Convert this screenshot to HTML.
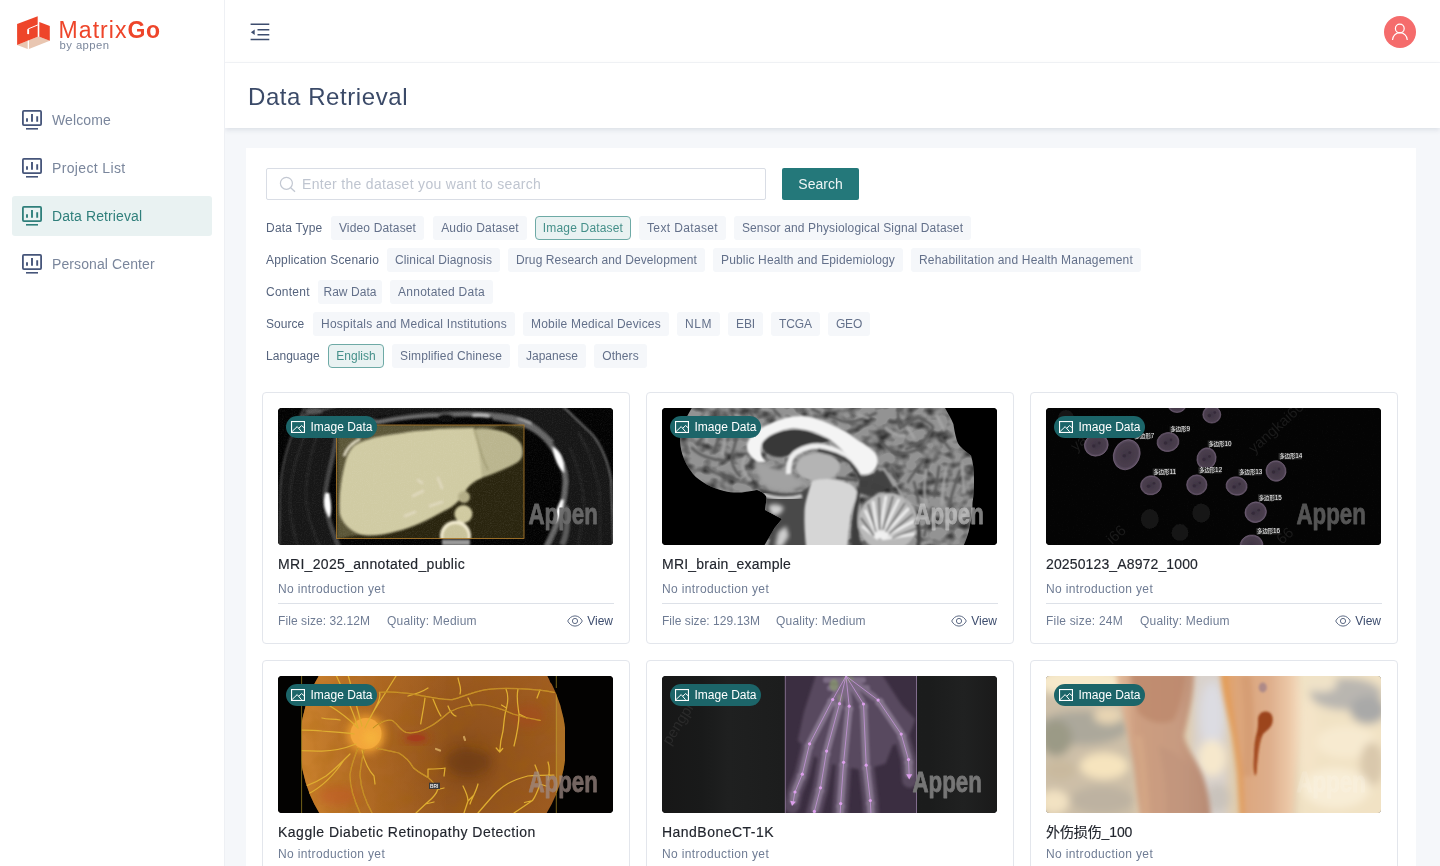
<!DOCTYPE html>
<html lang="en">
<head>
<meta charset="utf-8">
<title>Data Retrieval</title>
<style>
*{box-sizing:border-box;margin:0;padding:0}
html,body{width:1440px;height:866px;overflow:hidden;background:#f5f7fa}
body{font-family:"Liberation Sans","Noto Sans CJK SC",sans-serif;color:#3d4d6e;position:relative;-webkit-font-smoothing:antialiased}
#side,#head,#title,#panel{will-change:transform}
/* sidebar */
#side{z-index:2;position:absolute;left:0;top:0;width:225px;height:866px;background:#fff;border-right:1px solid #eef0f4}
#logo{position:absolute;left:17px;top:16px}
#brand{position:absolute;left:58.600px;top:16.500px;font-size:23px;line-height:26px;color:#ee452a;letter-spacing:1.050px;white-space:nowrap}
#brand b{font-weight:700;letter-spacing:.5px}
#by{position:absolute;left:59.500px;top:38px;font-size:11.3px;line-height:14px;color:#7b879c;letter-spacing:.44px;white-space:nowrap}
.mi{position:absolute;left:12px;width:200px;height:40px;border-radius:3px;font-size:14px;line-height:40px;color:#7a869c;white-space:nowrap}
.mi svg{position:absolute;left:9px;top:9px;color:#46557a}
.mi.on svg{color:#2f7f7b}
.mi span{position:absolute;left:40px;top:0}
.mi.on{background:#e9f2f2;color:#2f7f7b}
.mi span{letter-spacing:.1px}
/* header */
#head{position:absolute;left:225px;top:0;width:1215px;height:63px;background:#fff;border-bottom:1px solid #f4f5f8;box-shadow:0 1px 2px rgba(30,50,90,.03)}
#title{position:absolute;left:225px;top:63px;width:1215px;height:65px;background:#fff;box-shadow:0 2px 5px rgba(40,60,90,.12)}
#title h1{position:absolute;left:23px;top:18px;font-size:24px;line-height:32px;font-weight:400;color:#3b4a68;letter-spacing:.57px;white-space:nowrap}
#avatar{position:absolute;left:1384px;top:16px;width:32px;height:32px;border-radius:50%;background:#f56c6c}
/* panel */
#panel{position:absolute;left:246px;top:148px;width:1170px;height:730px;background:#fff}
#search{position:absolute;left:20px;top:20px;width:500px;height:32px;border:1px solid #d9dde5;border-radius:2px;background:#fff}
#search span{position:absolute;left:35px;top:0;line-height:30px;font-size:14px;color:#bfc5d0;letter-spacing:.31px;white-space:nowrap}
#btn{position:absolute;left:536px;top:20px;width:77px;height:32px;background:#24787a;color:rgba(255,255,255,.92);font-size:14px;line-height:32px;text-align:center;border-radius:2px}
.lb,.tg{position:absolute;height:24px;white-space:nowrap;font-size:12px;line-height:24px;color:#56647e}
.tg{background:#f5f7fa;border-radius:3px;text-align:center;color:#63708a}
.tg.on{background:#e9f2f2;border:1px solid #6eaaa6;color:#45908a;line-height:22px;border-radius:4px}
/* cards */
.card{position:absolute;width:368px;height:252px;border:1px solid #e3e6ec;border-radius:4px;background:#fff}
.card .im{position:absolute;left:15px;top:15px;width:335px;height:137px;border-radius:4px;overflow:hidden;background:#000}
.card .im svg{display:block}
.badge{position:absolute;left:8px;top:8px;height:22px;width:91px;border-radius:11px;background:#1c6569;color:#fff;font-size:12px;line-height:22px}
.badge span{position:absolute;left:24.500px;top:0;white-space:nowrap}
.badge svg{position:absolute;left:5px;top:5px}
.card h3{position:absolute;left:15px;top:160px;font-size:14px;-webkit-text-stroke:.15px #22262e;line-height:22px;font-weight:400;color:#22262e;white-space:nowrap}
.card .ds{position:absolute;left:15px;top:186.800px;letter-spacing:.37px;font-size:12px;line-height:18px;color:#6f7c94;white-space:nowrap}
.card .hr{position:absolute;left:15px;top:210px;width:336px;height:1px;background:#dde1e8}
.card .ft{position:absolute;left:15px;top:219px;font-size:12px;line-height:18px;color:#6f7c94;white-space:nowrap}
.card .q{position:absolute;left:124px;top:219px;letter-spacing:.2px;font-size:12px;line-height:18px;color:#6f7c94;white-space:nowrap}
.card .vw{position:absolute;right:16px;top:219px;font-size:12px;line-height:18px;color:#3d4d6e;white-space:nowrap}
.card .vw svg{position:absolute;left:-20px;top:3px}
</style>
</head>
<body>
<div id="side">
  <svg id="logo" width="34" height="34" viewBox="0 0 34 34">
    <polygon points="0.1,28.9 20.7,20.7 22.3,20.7 32.8,24.8 11.3,33.3" fill="#e9c6b1"/>
    <polygon points="0.1,8.1 20.7,0.3 20.7,20.8 0.1,28.9" fill="#ee452a"/>
    <polygon points="22.3,6.1 32.8,10 32.8,24.7 22.3,20.8" fill="#ee452a"/>
    <path d="M20.9 8.9 11.2 12.9V18.2" fill="none" stroke="#fff" stroke-width="1"/>
    <rect x="10.3" y="13.3" width="1.8" height="4.7" fill="#fff"/>
    <rect x="10.7" y="24.6" width="1.3" height="9" fill="#fff"/>
  </svg>
  <div id="brand">Matrix<b>Go</b></div>
  <div id="by">by appen</div>
  <div class="mi" style="top:100px"><svg width="22" height="22" viewBox="0 0 22 22"><use href="#ic"/></svg><span>Welcome</span></div>
  <div class="mi" style="top:148px"><svg width="22" height="22" viewBox="0 0 22 22"><use href="#ic"/></svg><span style="letter-spacing:.36px">Project List</span></div>
  <div class="mi on" style="top:196px"><svg width="22" height="22" viewBox="0 0 22 22"><use href="#ic"/></svg><span>Data Retrieval</span></div>
  <div class="mi" style="top:244px"><svg width="22" height="22" viewBox="0 0 22 22"><use href="#ic"/></svg><span>Personal Center</span></div>
</div>
<svg width="0" height="0" style="position:absolute">
  <defs>
    <g id="ic" fill="none" stroke="currentColor">
      <rect x="1.9" y="1.9" width="18.2" height="14.2" rx="1" stroke-width="1.8"/>
      <path d="M5 19.8h12" stroke-width="1.6"/>
      <path d="M6 12.8V9.2M11 12.8V5M16.2 12.8V7.2" stroke-width="1.9"/>
    </g>
  </defs>
</svg>
<div id="head"><svg style="position:absolute;left:25px;top:22px" width="20" height="20" viewBox="0 0 20 20"><path d="M.6 2.25h18.7M7.5 7.75h11.8M7.500 12.750h11.8M.6 17.500h18.7" stroke="#3d4d6e" stroke-width="1.5" fill="none"/><path d="M.9 10.250 4.700 7.500V13Z" fill="#3d4d6e"/></svg></div>
<div id="avatar"><svg width="32" height="32" viewBox="0 0 32 32"><circle cx="15.8" cy="12.500" r="4.400" fill="none" stroke="#fff" stroke-width="1.2"/><path d="M8.500 24.100a7.400 7.400 0 0 1 14.800 0" fill="none" stroke="#fff" stroke-width="1.2"/></svg></div>
<div id="title"><h1>Data Retrieval</h1></div>
<div id="panel">
  <div id="search"><svg style="position:absolute;left:12px;top:7px" width="18" height="18" viewBox="0 0 18 18"><circle cx="7.400" cy="7.300" r="6" fill="none" stroke="#c3c8d2" stroke-width="1.2"/><path d="M11.700 11.700 16 15.800" stroke="#c3c8d2" stroke-width="1.300"/></svg><span>Enter the dataset you want to search</span></div>
  <div id="btn">Search</div>
<div class="lb" style="left:20px;top:68px;letter-spacing:0.22px">Data Type</div>
<div class="tg" style="left:85px;top:68px;width:93px;letter-spacing:0.16px">Video Dataset</div>
<div class="tg" style="left:187px;top:68px;width:94px;letter-spacing:0.18px">Audio Dataset</div>
<div class="tg on" style="left:289px;top:68px;width:96px;letter-spacing:0.17px">Image Dataset</div>
<div class="tg" style="left:393px;top:68px;width:87px;letter-spacing:0.36px">Text Dataset</div>
<div class="tg" style="left:488px;top:68px;width:237px;letter-spacing:0.13px">Sensor and Physiological Signal Dataset</div>
<div class="lb" style="left:20px;top:100px;letter-spacing:0.18px">Application Scenario</div>
<div class="tg" style="left:141px;top:100px;width:113px;letter-spacing:0.13px">Clinical Diagnosis</div>
<div class="tg" style="left:262px;top:100px;width:197px;letter-spacing:0.10px">Drug Research and Development</div>
<div class="tg" style="left:467px;top:100px;width:190px;letter-spacing:0.15px">Public Health and Epidemiology</div>
<div class="tg" style="left:665px;top:100px;width:230px;letter-spacing:0.18px">Rehabilitation and Health Management</div>
<div class="lb" style="left:20px;top:132px;letter-spacing:0.24px">Content</div>
<div class="tg" style="left:72px;top:132px;width:64px;letter-spacing:0.06px">Raw Data</div>
<div class="tg" style="left:144px;top:132px;width:103px;letter-spacing:0.24px">Annotated Data</div>
<div class="lb" style="left:20px;top:164px;letter-spacing:0.04px">Source</div>
<div class="tg" style="left:67px;top:164px;width:202px;letter-spacing:0.23px">Hospitals and Medical Institutions</div>
<div class="tg" style="left:277px;top:164px;width:146px;letter-spacing:0.17px">Mobile Medical Devices</div>
<div class="tg" style="left:431px;top:164px;width:43px;letter-spacing:0.50px">NLM</div>
<div class="tg" style="left:482px;top:164px;width:35px;letter-spacing:-0.11px">EBI</div>
<div class="tg" style="left:525px;top:164px;width:49px;letter-spacing:-0.04px">TCGA</div>
<div class="tg" style="left:582px;top:164px;width:42px;letter-spacing:-0.20px">GEO</div>
<div class="lb" style="left:20px;top:196px;letter-spacing:0.04px">Language</div>
<div class="tg on" style="left:82px;top:196px;width:56px;letter-spacing:0.02px">English</div>
<div class="tg" style="left:146px;top:196px;width:118px;letter-spacing:0.14px">Simplified Chinese</div>
<div class="tg" style="left:272px;top:196px;width:68px;letter-spacing:-0.01px">Japanese</div>
<div class="tg" style="left:348px;top:196px;width:53px;letter-spacing:0.07px">Others</div>
<svg width="0" height="0" style="position:absolute"><defs>
  <g id="bi" fill="none" stroke="#fff" stroke-width="1.1"><rect x=".55" y=".55" width="12.9" height="10.9"/><path d="M1 10.6 6.2 5.6 10.6 10.8M7.8 7.2 10.6 4.6 13.2 6.8" stroke-width="1"/></g>
  <g id="eye" fill="none" stroke="#5f6c86" stroke-width="1"><path d="M.7 6C2.200 3 4.800 .9 8 .9S13.800 3 15.300 6C13.800 9 11.200 11.100 8 11.100S2.200 9 .7 6Z"/><circle cx="8" cy="6" r="2.600"/></g>
</defs></svg>
<div class="card" style="left:16px;top:244px">
  <div class="im"><svg width="335" height="137" viewBox="0 0 335 137">
<defs>
<filter id="b1" x="-5%" y="-5%" width="110%" height="110%"><feGaussianBlur stdDeviation=".8"/></filter>
<filter id="b1b" x="-10%" y="-10%" width="120%" height="120%"><feGaussianBlur stdDeviation="1.6"/></filter>
<filter id="n1" x="0" y="0" width="100%" height="100%"><feTurbulence type="fractalNoise" baseFrequency=".9" numOctaves="2" seed="3" result="t"/><feColorMatrix in="t" type="matrix" values="0 0 0 0 1  0 0 0 0 1  0 0 0 0 1  .9 .9 0 0 -.75"/><feComposite in2="SourceGraphic" operator="in"/></filter>
<clipPath id="c1"><rect x="58.500" y="17" width="187.500" height="113.500"/></clipPath>
</defs>
<rect width="335" height="137" fill="#020202"/>
<!-- body wall -->
<g filter="url(#b1)">
<path d="M27 -2C14 22 4 50 2 80L1 139H62C54 120 46 104 47.500 87C50 72 57 50 61 20C90 8 130 4 168 4C215 5 250 10 268 26C282 40 290 58 288 74C287 95 280 118 268 139H337L333.500 72C330 50 320 30 310 22L285 -2Z" fill="#191919"/>
<path d="M30 18C22 40 14 60 12 84C11 100 14 120 20 139M40 24C34 44 28 64 28 86C28 104 34 122 42 139" fill="none" stroke="#232323" stroke-width="3"/>
<path d="M300 24C312 44 320 66 322 90L322 139M292 40C300 58 306 80 306 100L300 139" fill="none" stroke="#222" stroke-width="3"/>
<path d="M66 18C80 12 92 13 100 14C120 10 140 7 163 7C180 6 195 6 209 7C224 8 236 10 244 12.800C256 17 266 26 274 35" fill="none" stroke="#6b6b6b" stroke-width="4.500"/>
<path d="M196 7.500C202 7 206 7.500 210 8M240 12C244 13 248 14 252 16" fill="none" stroke="#b8b8b8" stroke-width="3.500" stroke-linecap="round"/>
<path d="M215 9C245 12 262 22 272 36C282 50 289 62 287 78C286 98 278 120 268 139" fill="none" stroke="#666" stroke-width="5.500"/>
<path d="M60 22C56 50 48 70 47.500 88C48 106 54 122 61 139" fill="none" stroke="#454545" stroke-width="4.500"/>
<path d="M27 -2C14 22 4 50 2 80L1 139" fill="none" stroke="#565656" stroke-width="1.100"/>
<path d="M23 8 58 -2" fill="none" stroke="#6a6a6a" stroke-width="1.200"/>
<path d="M285 -2 310 22C320 30 330 50 333.500 72L336 139" fill="none" stroke="#7a7a7a" stroke-width="1.200"/>
<ellipse cx="168" cy="10" rx="9" ry="4" fill="#0c0c0c"/>
<ellipse cx="36" cy="3" rx="9" ry="3" fill="#555"/>
</g>
<rect width="335" height="137" fill="#fff" filter="url(#n1)" opacity=".1"/>
<!-- ribs -->
<g filter="url(#b1)">
<path d="M48 86C46 94 47.500 102 51 108C53 104 52 94 50.500 86Z" fill="#fff" stroke="#fff" stroke-width="2"/>
<path d="M276 41C281 44 285 52 285 62C281 58 278 50 276 41Z" fill="#fff" stroke="#fff" stroke-width="2.500"/>
<path d="M284.500 92C284 100 281 108 277 114C278 106 281 98 284.500 92Z" fill="#fff" stroke="#fff" stroke-width="2.500"/>
<path d="M287 98C290 108 290 125 284 137" fill="none" stroke="#5a5a5a" stroke-width="6"/>
</g>
<!-- annotation -->
<rect x="58.500" y="17" width="187.500" height="113.500" fill="#2f2910" opacity=".88"/>
<g clip-path="url(#c1)">
<g filter="url(#b1)">
<path d="M60 17H246V20L225 17C215 20 205 22 196 20L150 21C125 24 100 28 84 34C76 38 70 46 67 56C63 70 61 85 61.500 100C62 112 70 122 82 126.500L59 131Z" fill="#7d7752" opacity=".6"/>
<path d="M196 21C215 19 235 24 243 36C246 44 245 50 240 54C230 60 216 66 203 70C196 60 192 40 196 21Z" fill="#bab58e"/>
<path d="M76 38C82 33 100 28 117 26C134 23 160 20 196 20C200 34 202 50 204 70C196 73 190 78 187 84C182 92 176 99 166 103C150 112 134 120 118 123.500C105 127 92 129 82 126.500C70 122 62 112 61.700 103C61 88 63 70 68 52C70 46 72 42 76 38Z" fill="#d0cba3"/>
<circle cx="186" cy="89" r="6" fill="#b3ad86"/>
<circle cx="185.400" cy="106" r="9" fill="#d0caa0"/>
<circle cx="177.500" cy="128" r="15.500" fill="#f3ecd0"/>
<circle cx="177.500" cy="128.500" r="12.500" fill="#c9c39a"/>
<path d="M66 48C68 42 74 35 82 31" fill="none" stroke="#f2ecd2" stroke-width="2.200"/>
<path d="M196 21 204 48 210 62" fill="none" stroke="#8f8960" stroke-width="1.500" opacity=".7"/>
<path d="M135 88l10-5M152 98l12-4M127 108l10-4M160 70l4 10M140 72l4 3" stroke="#efe6d6" stroke-width="2.600" stroke-linecap="round" opacity=".5"/>
</g>
<rect x="58" y="17" width="190" height="114" fill="#6a6030" filter="url(#n1)" opacity=".12"/>
</g>
<rect x="58.500" y="17" width="187.500" height="113.500" fill="none" stroke="#b9822f" stroke-width=".8"/>
<path d="M164 131.500h28v6h-28z" fill="#9a9a9a" filter="url(#b1)"/>
<g transform="translate(250.4,115.600) scale(.775,1)" fill="#6c6c6c" stroke="#6c6c6c" stroke-width=".8" stroke-linejoin="round" font-family="'Liberation Sans',sans-serif" font-weight="700" font-size="28.800" opacity=".93"><text>Appen</text></g>
</svg><div class="badge"><svg width="14" height="12"><use href="#bi"/></svg><span>Image Data</span></div></div>
  <h3 style="letter-spacing:0.32px">MRI_2025_annotated_public</h3>
  <div class="ds">No introduction yet</div><div class="hr"></div>
  <div class="ft" style="letter-spacing:.08px">File size: 32.12M</div><div class="q" style="left:124px">Quality: Medium</div>
  <div class="vw"><svg width="16" height="12"><use href="#eye"/></svg>View</div>
</div>
<div class="card" style="left:400px;top:244px">
  <div class="im"><svg width="335" height="137" viewBox="0 0 335 137">
<defs>
<filter id="b2" x="-5%" y="-5%" width="110%" height="110%"><feGaussianBlur stdDeviation="1"/></filter>
<filter id="b2b" x="-10%" y="-10%" width="120%" height="120%"><feGaussianBlur stdDeviation="2"/></filter>
<filter id="n2" x="0" y="0" width="100%" height="100%"><feTurbulence type="fractalNoise" baseFrequency=".07 .09" numOctaves="2" seed="11" result="t"/><feColorMatrix in="t" type="matrix" values="0 0 0 0 0  0 0 0 0 0  0 0 0 0 0  2.200 0 0 0 -.95"/><feComposite in2="SourceGraphic" operator="in"/><feGaussianBlur stdDeviation=".7"/></filter>
<clipPath id="c2"><path d="M31 -2C24 10 18 20 18 30C18 40 20 52 31 66C38 74 50 80 62 83C74 86 85 84 95 82C100 84 104 86 104.600 90L103 102 120 111 112.500 120 101.400 139H301C305 130 307 124 307.500 119C310 110 310.500 102 310.500 95C312 86 312 78 312 71C312 62 311 54 309 47.500C302 42 296 38 294.600 31.600C293 26 292 20 291.400 16C289 10 285 4 282 -2Z"/></clipPath>
</defs>
<rect width="335" height="137" fill="#000"/>
<g clip-path="url(#c2)">
<rect width="335" height="137" fill="#939393"/>
<rect width="335" height="137" fill="#626262" filter="url(#n2)" opacity=".8"/>
<g filter="url(#b2)" fill="none" stroke="#5b5b5b" stroke-width="2.600" stroke-linecap="round">
<path d="M168 8C176 12 184 15 190 14C200 12 208 8 214 5M236 -1C236 8 236 16 238 20.500C244 16 250 10 256.600 9.500C262 12 268 15 271 19C270 24 266 28 263 31.600C256 36 250 39 244 41M220 36C226 40 230 44 234.500 46C242 46 250 44 256.600 41M279 30 288 41M252 74C254 82 256 88 256.600 95M277 58.500C276 68 274 78 272.400 88.600M297.700 63C294 74 290 84 288 95M262 52C256 60 250 66 246 74M230 60 236 74M300 100 292 118M270 100 262 128"/>
<path d="M40 8C44 18 42 28 36 36M56 4C60 16 58 30 52 44M30 40C38 48 50 52 60 52M70 6C76 18 76 28 72 40C68 50 70 60 78 68M44 60C54 66 64 70 76 72M88 4 94 14M112 2 118 8M150 1 158 5"/>
</g>
<g filter="url(#b2)" fill="none" stroke="#a9a9a9" stroke-width="3" stroke-linecap="round" opacity=".8">
<path d="M264 62C262 74 262 86 264 98M284 60C282 72 280 84 280 96M246 20 252 30M224 20C230 26 236 28 242 28M196 6 206 10M62 20C64 30 62 40 60 46M46 22 44 34M84 48C78 56 80 64 88 72M275 8 282 22M300 56 302 84"/>
</g>
<!-- lower central dark region -->
<path d="M96 80C110 84 124 86 140 84L150 76 148 139H106L112 118 103 110 104 95Z" fill="#4a4a4a" filter="url(#b2)"/>
<path d="M106 98C112 95 118 96 122 100L118 106 110 108ZM116 124 124 118 127 128 120 139H113Z" fill="#cfcfcf" filter="url(#b2b)"/>
<path d="M100 86C110 90 124 92 140 88" stroke="#c6c6c6" stroke-width="4" fill="none" filter="url(#b2)"/>
<!-- area below CC / hypothalamus light -->
<path d="M92 50C100 56 112 60 126 62L146 78 128 84C114 84 100 80 96 70Z" fill="#a2a2a2" filter="url(#b2b)"/>
<!-- corpus callosum -->
<g filter="url(#b2)">
<path d="M85 40C84 32 92 22 107.700 15.800C118 11 128 8 139.400 8C152 9 162 13 171 17.400C180 21 188 26 194.800 31.600C202 36 208 40 210.600 42.700C214 46 216 50 215.300 54C215 62 208 67 201 66.500C195 66 192 62 191.600 58.500C189 52 184 46 179 41C172 34 166 30 160 27.700C150 23 140 20.500 131.500 20.500C120 21 108 27 100 36C98 42 98 48 104 54L96 54C90 50 86 46 85 40Z" fill="#f4f4f4"/>
<circle cx="202" cy="53" r="13.500" fill="#f4f4f4"/><path d="M99.800 36C104 28 116 22 131.500 21.500C142 22 152 25 160 28.500C164 30 167 31 168 32C160 36 150 38 140 42C130 46 122 50 115.600 49C106 48 100 42 99.800 36Z" fill="#383838"/>
<path d="M126.700 66C126 54 130 46 136 43.500C142 40 150 38 156 38C166 39 174 42 180 46L190 56" fill="none" stroke="#eee" stroke-width="5.500"/>
<ellipse cx="156" cy="59" rx="22" ry="14" fill="#b4b4b4"/>
<path d="M156 42C168 44 180 48 187 54C193 60 196 64 198 70" fill="none" stroke="#3c3c3c" stroke-width="3.500"/>
<path d="M174 70 196 72" stroke="#555" stroke-width="3"/>
<!-- brainstem -->
<path d="M150 73C160 70 176 70 188 76C194 80 196 84 194.800 88.600C192 96 189 104 188.400 111C187 120 186 130 185 139H144C143 128 142 116 142.500 103C143 94 146 86 147 82C148 78 149 75 150 73Z" fill="#d6d6d6"/>
<path d="M195 76C199 84 198 92 196 100C194 112 196 126 200 139H190C188 126 190 112 192 100C194 92 196 84 195 76Z" fill="#3c3c3c"/>
<path d="M197 70 222 62 231 79 207 88 197 85Z" fill="#424242"/>
<!-- cerebellum -->
<ellipse cx="226" cy="114" rx="30" ry="29" fill="#b9b9b9"/>
<path d="M216 130 203 102M216 130 211 93M217 130 224 88M218 130 237 91M219 130 247 100M220 130 254 112M220 131 253 126M216 131 200 118" stroke="#f0f0f0" stroke-width="2.600" fill="none"/>
<path d="M214 124 206 96M218 122 217 89M221 122 231 88M224 124 243 95M227 126 251 106M230 130 255 120M212 128 199 110" stroke="#474747" stroke-width="1.300" fill="none"/>
<path d="M198 76C206 76 214 78 222 82" stroke="#3f3f3f" stroke-width="5" fill="none"/>
<path d="M221 60C232 74 244 92 254 110" stroke="#a8a8a8" stroke-width="2" fill="none"/>
<path d="M216 62 206 80" stroke="#444" stroke-width="3" fill="none"/>
<path d="M254 112C258 122 258 130 256 139" stroke="#444" stroke-width="4" fill="none"/>
</g>
</g>
<g transform="translate(252.4,115.600) scale(.775,1)" fill="#d2d2d2" stroke="#d2d2d2" stroke-width=".8" stroke-linejoin="round" font-family="'Liberation Sans',sans-serif" font-weight="700" font-size="28.800" opacity=".6"><text>Appen</text></g>
</svg><div class="badge"><svg width="14" height="12"><use href="#bi"/></svg><span>Image Data</span></div></div>
  <h3 style="letter-spacing:0.22px">MRI_brain_example</h3>
  <div class="ds">No introduction yet</div><div class="hr"></div>
  <div class="ft" style="letter-spacing:.04px">File size: 129.13M</div><div class="q" style="left:129px">Quality: Medium</div>
  <div class="vw"><svg width="16" height="12"><use href="#eye"/></svg>View</div>
</div>
<div class="card" style="left:784px;top:244px">
  <div class="im"><svg width="335" height="137" viewBox="0 0 335 137">
<defs><filter id="b3" x="-10%" y="-10%" width="120%" height="120%"><feGaussianBlur stdDeviation=".5"/></filter>
<filter id="n3" x="0" y="0" width="100%" height="100%"><feTurbulence type="fractalNoise" baseFrequency=".8" numOctaves="2" seed="5" result="t"/><feColorMatrix in="t" type="matrix" values="0 0 0 0 1  0 0 0 0 1  0 0 0 0 1  1.2 .6 0 0 -.9"/><feComposite in2="SourceGraphic" operator="in"/></filter>
<radialGradient id="g3"><stop offset="0" stop-color="#3f3543"/><stop offset=".8" stop-color="#4a3e4e"/><stop offset="1" stop-color="#625367"/></radialGradient></defs>
<rect width="335" height="137" fill="#040404"/>
<rect width="335" height="137" fill="#fff" filter="url(#n3)" opacity=".045"/>
<g font-family="'Liberation Sans',sans-serif" font-size="15" fill="#1b1b1b"><text transform="translate(208,46) rotate(-42)">yangkai66</text><text transform="translate(30,44) rotate(-42)">ya</text><text transform="translate(66,137) rotate(-42)">i66</text><text transform="translate(236,137) rotate(-42)">66</text></g>
<g fill="#141414" filter="url(#b3)">
<ellipse cx="103.8" cy="111" rx="9" ry="10"/>
<ellipse cx="155.3" cy="105" rx="9" ry="9.5"/>
<ellipse cx="134" cy="124.5" rx="8.5" ry="8.5"/>
<ellipse cx="20" cy="10" rx="8" ry="8"/>
</g><g filter="url(#b3)" fill="url(#g3)" stroke="#7a687f" stroke-width=".6">
<ellipse cx="50.3" cy="37" rx="12" ry="11" transform="rotate(-20 50.3 37)"/>
<ellipse cx="80.7" cy="46.7" rx="13" ry="15.5" transform="rotate(25 80.7 46.7)"/>
<ellipse cx="122" cy="34" rx="11" ry="9.5" transform="rotate(-10 122 34)"/>
<ellipse cx="165.8" cy="6.6" rx="9" ry="8.5" transform="rotate(0 165.8 6.6)"/>
<ellipse cx="131" cy="-3" rx="9" ry="7.5" transform="rotate(0 131 -3)"/>
<ellipse cx="160.5" cy="50.5" rx="9.5" ry="10.8" transform="rotate(15 160.5 50.5)"/>
<ellipse cx="105" cy="77.3" rx="10.5" ry="9.5" transform="rotate(-10 105 77.3)"/>
<ellipse cx="150.8" cy="76.8" rx="10.2" ry="10" transform="rotate(0 150.8 76.8)"/>
<ellipse cx="190.6" cy="78" rx="10.6" ry="9.2" transform="rotate(10 190.6 78)"/>
<ellipse cx="230" cy="63" rx="10" ry="10.3" transform="rotate(-15 230 63)"/>
<ellipse cx="209.7" cy="104.2" rx="10.8" ry="10.2" transform="rotate(-25 209.7 104.2)"/>
<ellipse cx="205.5" cy="137.5" rx="11.5" ry="10.5" transform="rotate(-10 205.5 137.5)"/>
</g><g fill="#362c3a" filter="url(#b3)">
<circle cx="47.8" cy="38.0" r="1.800"/><circle cx="53.3" cy="35.0" r="1.400"/>
<circle cx="78.2" cy="47.7" r="1.800"/><circle cx="83.7" cy="44.7" r="1.400"/>
<circle cx="119.5" cy="35.0" r="1.800"/><circle cx="125.0" cy="32.0" r="1.400"/>
<circle cx="163.3" cy="7.6" r="1.800"/><circle cx="168.8" cy="4.6" r="1.400"/>
<circle cx="128.5" cy="-2.0" r="1.800"/><circle cx="134.0" cy="-5.0" r="1.400"/>
<circle cx="158.0" cy="51.5" r="1.800"/><circle cx="163.5" cy="48.5" r="1.400"/>
<circle cx="102.5" cy="78.3" r="1.800"/><circle cx="108.0" cy="75.3" r="1.400"/>
<circle cx="148.3" cy="77.8" r="1.800"/><circle cx="153.8" cy="74.8" r="1.400"/>
<circle cx="188.1" cy="79.0" r="1.800"/><circle cx="193.6" cy="76.0" r="1.400"/>
<circle cx="227.5" cy="64.0" r="1.800"/><circle cx="233.0" cy="61.0" r="1.400"/>
<circle cx="207.2" cy="105.2" r="1.800"/><circle cx="212.7" cy="102.2" r="1.400"/>
</g><g font-family="'Liberation Sans','Noto Sans CJK SC',sans-serif" font-size="5.300" fill="#f4f4f4">
<rect x="88" y="25.5" width="18" height="5.6" fill="#2b2b2b"/><text x="88.8" y="30.0">多边形<tspan font-size="6.400">7</tspan></text>
<rect x="123.7" y="18.3" width="20.3" height="5.8" fill="#2b2b2b"/><text x="124.5" y="23.0">多边形<tspan font-size="6.400">9</tspan></text>
<rect x="161.7" y="32.6" width="23.5" height="6.1" fill="#2b2b2b"/><text x="162.5" y="37.6">多边形<tspan font-size="6.400">10</tspan></text>
<rect x="232.6" y="45" width="23.1" height="6.4" fill="#2b2b2b"/><text x="233.4" y="50.3">多边形<tspan font-size="6.400">14</tspan></text>
<rect x="106.7" y="60.5" width="23.3" height="6.4" fill="#2b2b2b"/><text x="107.5" y="65.8">多边形<tspan font-size="6.400">11</tspan></text>
<rect x="152.4" y="59.3" width="23.1" height="6.1" fill="#2b2b2b"/><text x="153.2" y="64.3">多边形<tspan font-size="6.400">12</tspan></text>
<rect x="192.5" y="61" width="23.1" height="6.4" fill="#2b2b2b"/><text x="193.3" y="66.3">多边形<tspan font-size="6.400">13</tspan></text>
<rect x="212" y="86.3" width="23" height="6.3" fill="#2b2b2b"/><text x="212.8" y="91.5">多边形<tspan font-size="6.400">15</tspan></text>
<rect x="210.3" y="120" width="23.6" height="6.4" fill="#2b2b2b"/><text x="211.1" y="125.3">多边形<tspan font-size="6.400">16</tspan></text>
</g>
<g transform="translate(250.4,115.600) scale(.775,1)" fill="#555" stroke="#555" stroke-width=".8" stroke-linejoin="round" font-family="'Liberation Sans',sans-serif" font-weight="700" font-size="28.800"><text>Appen</text></g>
</svg><div class="badge"><svg width="14" height="12"><use href="#bi"/></svg><span>Image Data</span></div></div>
  <h3 style="letter-spacing:0.13px">20250123_A8972_1000</h3>
  <div class="ds">No introduction yet</div><div class="hr"></div>
  <div class="ft" style="letter-spacing:.2px">File size: 24M</div><div class="q" style="left:109px">Quality: Medium</div>
  <div class="vw"><svg width="16" height="12"><use href="#eye"/></svg>View</div>
</div>
<div class="card" style="left:16px;top:512px">
  <div class="im"><svg width="335" height="137" viewBox="0 0 335 137">
<defs>
<filter id="b4" x="-5%" y="-5%" width="110%" height="110%"><feGaussianBlur stdDeviation=".45"/></filter>
<filter id="b4b" x="-30%" y="-30%" width="160%" height="160%"><feGaussianBlur stdDeviation="4"/></filter>
<filter id="n4" x="0" y="0" width="100%" height="100%"><feTurbulence type="fractalNoise" baseFrequency=".05" numOctaves="3" seed="8" result="t"/><feColorMatrix in="t" type="matrix" values="0 0 0 0 .35  0 0 0 0 .12  0 0 0 0 0  1.800 0 0 0 -.7"/><feComposite in2="SourceGraphic" operator="in"/></filter>
<radialGradient id="g4" cx="190" cy="86" r="170" gradientUnits="userSpaceOnUse"><stop offset="0" stop-color="#7c4517"/><stop offset=".2" stop-color="#91531d"/><stop offset=".55" stop-color="#9d5b20"/><stop offset="1" stop-color="#a96425"/></radialGradient>
<linearGradient id="g4l" x1="24" x2="170" y1="0" y2="0" gradientUnits="userSpaceOnUse"><stop offset="0" stop-color="#d48a30" stop-opacity=".8"/><stop offset=".45" stop-color="#c47a28" stop-opacity=".45"/><stop offset="1" stop-color="#c47a28" stop-opacity="0"/></linearGradient>
<clipPath id="c4"><path d="M23.600 -1H271L272 6 278.500 12 287 40V100L278 137H23.600Z"/></clipPath>
<clipPath id="c4d"><circle cx="155" cy="68" r="133"/></clipPath>
</defs>
<rect width="335" height="137" fill="#030201"/>
<g clip-path="url(#c4)"><g clip-path="url(#c4d)">
<rect width="335" height="137" fill="url(#g4)"/>
<rect width="335" height="137" fill="url(#g4l)"/>
<rect width="335" height="137" fill="#fff" filter="url(#n4)" opacity=".3"/>
<ellipse cx="190" cy="86" rx="22" ry="13" fill="#6f3c12" filter="url(#b4b)" opacity=".7"/>
<ellipse cx="138" cy="62" rx="12" ry="4.500" fill="#a3391a" filter="url(#b4b)" opacity="1"/>
<ellipse cx="138" cy="62" rx="9" ry="3" fill="#a83a1c" opacity=".7" filter="url(#b4)"/>
<ellipse cx="60" cy="120" rx="20" ry="10" fill="#c05a28" filter="url(#b4b)" opacity=".6"/>
<ellipse cx="250" cy="40" rx="16" ry="12" fill="#a84a1c" filter="url(#b4b)" opacity=".5"/>
<circle cx="88" cy="58" r="19" fill="#f2a233" filter="url(#b4b)" opacity=".9"/>
<circle cx="88" cy="57.600" r="15.500" fill="#f3a63a" filter="url(#b4)"/>
<circle cx="93" cy="62" r="8" fill="#f6b83e" filter="url(#b4b)" opacity=".8"/>
<path d="M158 73l4 1.500M186 61l1 3" stroke="#e8c070" stroke-width="2.200" stroke-linecap="round" opacity=".7"/>
<g filter="url(#b4)" fill="none" stroke="#dfae30" stroke-width="1.250" stroke-linecap="round" stroke-linejoin="round">
<path d="M87 52C92 40 100 28 108 16L118 0M84 50C80 36 76 20 72 6L70 -1M80 52C76 36 66 16 58 -1M90 46C96 34 104 22 101.400 16.300C115 15 128 17 137.800 18.700C150 21 162 24 174.300 23.600C184 21 192 17 201 15.100C214 12 228 12 240 12.700C252 13 264 14 276 16.300"/>
<path d="M95 52C102 46 108 43 113.500 44.300C119 47 122 54 128 56.400C136 58 146 54 152.400 50.300C160 46 166 40 171.900 35.800C180 31 190 29 201 28.500C212 29 224 33 235 38C244 41 252 43 262 44.300"/>
<path d="M228 13C231 20 230 26 228.500 32C226 40 226 48 225 55C223 62 222 70 221.700 76M221.700 76l-3.500 -4M221.700 76l3 -3.500M240 13C238 22 240 30 241 38C241 48 239 58 236 70M241 38l8 4M228.500 32l-5 -3M262 14l-3 8M180 2C181 8 184 12 182 18M150 12C144 16 138 18 130 20M147 22C146 30 144 40 142.700 47.900M155 23C158 30 160 36 163 40M170 30C172 36 176 40 178 40M190 22l4 8"/>
<path d="M80 52C72 44 62 36 52 30C44 26 34 22 24 20M76 58C66 56 54 56 44 55C36 54 30 54 23.600 54M78 68C68 72 56 75 44 75C36 75 30 74.600 23.600 74.600M72 78C64 86 56 94 48 100C42 104 36 107 28 110M66 84C58 96 46 110 30 118M62 44C56 42 50 44 44 42"/>
<path d="M80 72C76 82 72 92 72 100C72 112 76 124 82 137M86 74C84 84 82 92 82 100C83 112 88 126 94 137M84 74C86 86 92 96 96 100M96 100l1 8"/>
<path d="M99 72.200C106 74 114 75 120.800 77C128 81 132 86 135.400 91.700C140 96 146 99 150 101.400C154 105 158 110 159.700 113.500C158 120 152 124 147.600 128L138 137M150 93C156 93 162 93 167 92M150 101.400L150 93M167 92L166 100M159.700 113.500L166 112M147.600 128L156 126"/>
<path d="M185 110C188 116 190 120 190 125L186 137M200 108C198 116 194 122 192 128M190 125l6 -6"/>
<path d="M276 99C266 99 258 99 249.700 100C242 102 236 104 230 107.500C222 112 216 118 210.800 124.500L200 137M257 89C260 96 262 102 262 108C260 114 258 120 254.500 124.500L236 137M270 86C272 92 272 96 270 104M254.500 124.500l-8 2M262 108l6 2"/>
</g>
<g filter="url(#b4)" fill="none" stroke="#8d4a12" stroke-width=".45" opacity=".8">
<path d="M95 52C102 46 108 43 113.500 44.300C119 47 122 54 128 56.400C136 58 146 54 152.400 50.300C160 46 166 40 171.900 35.800C180 31 190 29 201 28.500C212 29 224 33 235 38C244 41 252 43 262 44.300M101.400 16.300C115 15 128 17 137.800 18.700C150 21 162 24 174.300 23.600C184 21 192 17 201 15.100C214 12 228 12 240 12.700C252 13 264 14 276 16.300M80 72C76 82 72 92 72 100C72 112 76 124 82 137M86 74C84 84 82 92 82 100C83 112 88 126 94 137M99 72.200C106 74 114 75 120.800 77C128 81 132 86 135.400 91.700C140 96 146 99 150 101.400C154 105 158 110 159.700 113.500"/>
</g>
<path d="M278.300 0V137" stroke="#b9952c" stroke-width=".8"/>
<path d="M278.300 12h9v125h-9z" fill="#d4a636" opacity=".28"/>
</g></g>
<path d="M23.600 0V137" stroke="#8f7a20" stroke-width=".8"/>
<path d="M278.300 0V12M278.300 118V137" stroke="#8f7a20" stroke-width=".8"/>
<rect x="151" y="106.700" width="11" height="6.300" fill="#3a3a3a"/>
<text x="152" y="111.900" font-family="'Liberation Sans',sans-serif" font-size="4.800" fill="#eee" font-weight="700">BRI</text>
<g transform="translate(250.4,115.600) scale(.775,1)" fill="#a08c86" stroke="#a08c86" stroke-width=".8" stroke-linejoin="round" font-family="'Liberation Sans',sans-serif" font-weight="700" font-size="28.800" opacity=".72"><text>Appen</text></g>
</svg><div class="badge"><svg width="14" height="12"><use href="#bi"/></svg><span>Image Data</span></div></div>
  <h3 style="letter-spacing:0.49px">Kaggle Diabetic Retinopathy Detection</h3>
  <div class="ds" style="top:183.800px">No introduction yet</div>
</div>
<div class="card" style="left:400px;top:512px">
  <div class="im"><svg width="335" height="137" viewBox="0 0 335 137">
<defs><filter id="b5" x="-10%" y="-10%" width="120%" height="120%"><feGaussianBlur stdDeviation=".9"/></filter><filter id="b5b" x="-20%" y="-20%" width="140%" height="140%"><feGaussianBlur stdDeviation="1.600"/></filter>
<linearGradient id="g5" x1="0" x2="335" y1="0" y2="0" gradientUnits="userSpaceOnUse"><stop offset="0" stop-color="#171717"/><stop offset=".12" stop-color="#191a1a"/><stop offset=".2" stop-color="#1f2020"/><stop offset=".36" stop-color="#1c1d1d"/><stop offset=".8" stop-color="#1b1c1c"/><stop offset=".9" stop-color="#202121"/><stop offset="1" stop-color="#1a1a1a"/></linearGradient>
<clipPath id="c5"><rect x="123.300" y="0" width="131.200" height="137"/></clipPath></defs>
<rect width="335" height="137" fill="url(#g5)"/>
<g font-family="'Liberation Sans',sans-serif" font-size="15" fill="#2a2a2a"><text transform="translate(8,70) rotate(-58)">pengpn</text></g>
<rect x="123.300" y="0" width="131.200" height="137" fill="#3b2e41"/>
<g clip-path="url(#c5)">
<g filter="url(#b5b)" fill="none" stroke="#594a5f" stroke-linecap="round" stroke-linejoin="round">
<path d="M157 -4L144 36 138 64 160 84 200 92 222 86 229 68 244 62 251 44 238 30 216 -4Z" fill="#594a5f" stroke-width="4"/>
<path d="M170.7 23.6 147.6 67.8 140.3 98.2 133.0 116.0 130.0 129.9" stroke-width="15"/>
<path d="M177.5 27.7 164.6 75.1 158.5 111.8 152.4 135.4 151.2 140.3" stroke-width="15.5"/>
<path d="M187.2 30.2 181.6 86.3 178.7 127.6 178.0 140.3" stroke-width="15.5"/>
<path d="M201.5 28.0 204.2 89.2 208.3 124.5 209.1 140.3" stroke-width="15.5"/>
<path d="M216.1 24.1 239.2 58.1 246.5 83.6 247.7 104.2" stroke-width="15"/>
</g>
<g filter="url(#b5)" fill="none" stroke="#84748c" stroke-linecap="round">
<path d="M169.6 25.5L148.6 65.9" stroke-width="7.500"/>
<circle cx="169.5" cy="25.8" r="2.200" stroke-width="4.500"/>
<path d="M147.1 70.0L140.8 96.1" stroke-width="7.500"/>
<circle cx="147.0" cy="70.3" r="2.200" stroke-width="4.500"/>
<path d="M139.4 100.3L133.8 113.9" stroke-width="7.500"/>
<circle cx="139.3" cy="100.5" r="2.200" stroke-width="4.500"/>
<path d="M132.6 118.1L131.4 124.7" stroke-width="7.500"/>
<circle cx="132.5" cy="118.4" r="2.200" stroke-width="4.500"/>
<path d="M176.9 29.9L165.2 73.0" stroke-width="7.500"/>
<circle cx="176.8" cy="30.1" r="2.200" stroke-width="4.500"/>
<path d="M164.2 77.3L158.9 109.7" stroke-width="7.500"/>
<circle cx="164.2" cy="77.6" r="2.200" stroke-width="4.500"/>
<path d="M158.0 114.0L153.0 133.3" stroke-width="7.500"/>
<circle cx="157.9" cy="114.3" r="2.200" stroke-width="4.500"/>
<path d="M187.0 32.4L181.8 84.1" stroke-width="7.500"/>
<circle cx="186.9" cy="32.7" r="2.200" stroke-width="4.500"/>
<path d="M181.4 88.5L178.8 125.4" stroke-width="7.500"/>
<circle cx="181.4" cy="88.8" r="2.200" stroke-width="4.500"/>
<path d="M178.6 129.8L178.1 138.1" stroke-width="7.500"/>
<circle cx="178.5" cy="130.1" r="2.200" stroke-width="4.500"/>
<path d="M201.6 30.2L204.1 87.0" stroke-width="7.500"/>
<circle cx="201.6" cy="30.5" r="2.200" stroke-width="4.500"/>
<path d="M204.5 91.4L208.1 122.3" stroke-width="7.500"/>
<circle cx="204.5" cy="91.7" r="2.200" stroke-width="4.500"/>
<path d="M208.4 126.7L209.0 138.1" stroke-width="7.500"/>
<circle cx="208.4" cy="127.0" r="2.200" stroke-width="4.500"/>
<path d="M217.3 25.9L238.0 56.3" stroke-width="7.500"/>
<circle cx="217.5" cy="26.2" r="2.200" stroke-width="4.500"/>
<path d="M239.8 60.2L245.9 81.5" stroke-width="7.500"/>
<circle cx="239.9" cy="60.5" r="2.200" stroke-width="4.500"/>
<path d="M246.6 85.8L247.1 98.0" stroke-width="7.500"/>
<circle cx="246.6" cy="86.1" r="2.200" stroke-width="4.500"/>
<path d="M180.0 7.1L172.3 20.8" stroke-width="7" stroke="#7b6b83"/>
<path d="M182.1 8.3L178.3 24.4" stroke-width="7" stroke="#7b6b83"/>
<path d="M185.0 9.1L186.8 26.5" stroke-width="7" stroke="#7b6b83"/>
<path d="M189.3 8.4L199.4 24.6" stroke-width="7" stroke="#7b6b83"/>
<path d="M193.7 7.2L212.3 21.2" stroke-width="7" stroke="#7b6b83"/>
<path d="M164 4 204 4M168 12 206 12" stroke="#7c6c84" stroke-width="6" stroke-dasharray="5 3"/>
</g>
<ellipse cx="172" cy="9" rx="4.500" ry="6" fill="#87966d" filter="url(#b5)" opacity=".75"/><ellipse cx="186" cy="3" rx="6" ry="3" fill="#80906a" filter="url(#b5)" opacity=".55"/><ellipse cx="178" cy="22" rx="2.500" ry="4" fill="#87966d" filter="url(#b5)" opacity=".5"/>
<g fill="none" stroke="#c795da" stroke-width=".8">
<path d="M184.0 0.0 170.7 23.6 147.6 67.8 140.3 98.2 133.0 116.0 131.0 126.9"/>
<path d="M184.0 0.0 177.5 27.7 164.6 75.1 158.5 111.8 152.4 135.4 151.2 140.3"/>
<path d="M184.0 0.0 187.2 30.2 181.6 86.3 178.7 127.6 178.0 140.3"/>
<path d="M184.0 0.0 201.5 28.0 204.2 89.2 208.3 124.5 209.1 140.3"/>
<path d="M184.0 0.0 216.1 24.1 239.2 58.1 246.5 83.6 247.2 100.2"/>
</g><g fill="#dc9fec">
<circle cx="170.7" cy="23.6" r="1.600"/>
<circle cx="147.6" cy="67.8" r="1.600"/>
<circle cx="140.3" cy="98.2" r="1.600"/>
<circle cx="133.0" cy="116.0" r="1.600"/>
<circle cx="177.5" cy="27.7" r="1.600"/>
<circle cx="164.6" cy="75.1" r="1.600"/>
<circle cx="158.5" cy="111.8" r="1.600"/>
<circle cx="152.4" cy="135.4" r="1.600"/>
<circle cx="187.2" cy="30.2" r="1.600"/>
<circle cx="181.6" cy="86.3" r="1.600"/>
<circle cx="178.7" cy="127.6" r="1.600"/>
<circle cx="201.5" cy="28.0" r="1.600"/>
<circle cx="204.2" cy="89.2" r="1.600"/>
<circle cx="208.3" cy="124.5" r="1.600"/>
<circle cx="216.1" cy="24.1" r="1.600"/>
<circle cx="239.2" cy="58.1" r="1.600"/>
<circle cx="246.5" cy="83.6" r="1.600"/>
</g>
<path d="M128.2 124.7L133.8 125.7L130.0 130.1Z" fill="#dc9fec"/>
<path d="M244.2 98.2L250.2 98.2L247.2 103.4Z" fill="#dc9fec"/>
</g>
<path d="M123.300 0V137M254.500 0V137" stroke="#a78cb4" stroke-width=".7"/>
<g transform="translate(250.4,115.600) scale(.775,1)" fill="#767676" stroke="#767676" stroke-width=".8" stroke-linejoin="round" font-family="'Liberation Sans',sans-serif" font-weight="700" font-size="28.800"><text>Appen</text></g>
</svg><div class="badge"><svg width="14" height="12"><use href="#bi"/></svg><span>Image Data</span></div></div>
  <h3 style="letter-spacing:0.47px">HandBoneCT-1K</h3>
  <div class="ds" style="top:183.800px">No introduction yet</div>
</div>
<div class="card" style="left:784px;top:512px">
  <div class="im"><svg width="335" height="137" viewBox="0 0 335 137">
<defs>
<filter id="b6" x="-20%" y="-20%" width="140%" height="140%"><feGaussianBlur stdDeviation="4.500"/></filter>
<filter id="b6s" x="-20%" y="-20%" width="140%" height="140%"><feGaussianBlur stdDeviation="2.500"/></filter>
<filter id="b6t" x="-20%" y="-20%" width="140%" height="140%"><feGaussianBlur stdDeviation="1.100"/></filter>
<linearGradient id="g6a" x1="70" x2="160" y1="0" y2="0" gradientUnits="userSpaceOnUse"><stop offset="0" stop-color="#e6bf9e"/><stop offset=".22" stop-color="#cd9e80"/><stop offset=".7" stop-color="#c79a80"/><stop offset="1" stop-color="#b88b74"/></linearGradient>
<linearGradient id="g6b" x1="176" x2="256" y1="0" y2="0" gradientUnits="userSpaceOnUse"><stop offset="0" stop-color="#e5a263"/><stop offset=".2" stop-color="#dca57a"/><stop offset=".6" stop-color="#deae8c"/><stop offset=".85" stop-color="#ecc9a8"/><stop offset="1" stop-color="#f6e2c6"/></linearGradient>
</defs>
<rect width="335" height="137" fill="#dfcdb0"/>
<g filter="url(#b6)">
<rect x="-10" y="-10" width="100" height="160" fill="#cdbfa8"/>
<ellipse cx="36" cy="6" rx="46" ry="15" fill="#f7e9ca"/>
<ellipse cx="36" cy="52" rx="46" ry="17" fill="#aca89b"/>
<ellipse cx="10" cy="62" rx="16" ry="18" fill="#9b9a86"/>
<ellipse cx="62" cy="40" rx="14" ry="8" fill="#e9d6b4"/>
<ellipse cx="58" cy="90" rx="24" ry="13" fill="#f6e4be"/>
<ellipse cx="14" cy="94" rx="16" ry="10" fill="#c9b99e"/>
<ellipse cx="8" cy="126" rx="15" ry="12" fill="#f2e2c2"/>
<ellipse cx="56" cy="124" rx="32" ry="14" fill="#bdb2a1"/>
<rect x="146" y="-10" width="36" height="160" fill="#d9d2cc"/>
<ellipse cx="166" cy="40" rx="12" ry="34" fill="#dcdce2"/>
<ellipse cx="166" cy="82" rx="14" ry="18" fill="#f6e8cc"/>
<ellipse cx="172" cy="122" rx="12" ry="14" fill="#c9c3bc"/>
<rect x="250" y="-10" width="95" height="160" fill="#f1e2c4"/>
<ellipse cx="300" cy="18" rx="36" ry="16" fill="#b9b6b0"/>
<ellipse cx="322" cy="34" rx="18" ry="14" fill="#a9a9a8"/>
<ellipse cx="275" cy="8" rx="16" ry="8" fill="#efe2c8"/>
<ellipse cx="300" cy="66" rx="30" ry="16" fill="#f7ead0"/>
<ellipse cx="326" cy="88" rx="12" ry="22" fill="#d9c8ac"/>
<ellipse cx="290" cy="112" rx="34" ry="20" fill="#f8edd6"/>
<ellipse cx="262" cy="60" rx="10" ry="40" fill="#f4e4c8"/>
</g>
<g filter="url(#b6s)">
<path d="M70 -4H148C148 20 142 40 138 60C140 72 152 86 157 100C162 114 164 126 165 141H94C92 126 90 112 89 100C88 86 84 72 82 60C78 40 72 20 70 -4Z" fill="url(#g6a)"/>
<path d="M174 -4H252C256 20 256 40 254.500 60C253 76 251 90 249.700 100C249 114 248 128 247 141H194C193 128 192 114 191.300 100C190 86 188 72 186.500 60C182 40 176 20 174 -4Z" fill="url(#g6b)"/>
<path d="M84 -4H140C138 16 134 30 128 44C116 50 100 46 92 36C88 24 86 10 84 -4Z" fill="#b98266" opacity=".6"/>
<path d="M112 70C124 72 140 84 150 100C156 114 158 128 158 141H120C122 120 118 92 112 70Z" fill="#bd917a" opacity=".5"/>
<path d="M92 60C96 80 98 110 100 141" stroke="#d6aa88" stroke-width="8" fill="none" opacity=".7"/>
<path d="M178 -2C182 30 190 60 194 100L196 141" stroke="#e39a50" stroke-width="5" fill="none" opacity=".75"/>
<path d="M200 0C204 30 204 60 202 100" stroke="#cf9468" stroke-width="10" fill="none" opacity=".5"/>
</g>
<g filter="url(#b6t)">
<ellipse cx="216.800" cy="11.500" rx="4" ry="5" fill="#9d7f88" opacity=".75"/>
<path d="M212 44C212 38 216 35 220 35.500C226 36 228 42 226 48C224 53 220 55 217 58C214 64 213 72 212 80C211 88 211 96 209.500 100C207 96 207.500 88 208 80C208 70 209 62 211 56C212 52 212 48 212 44Z" fill="#9c441c"/>
<path d="M213 60C211 72 210 86 209.500 98" stroke="#b4582c" stroke-width="2" fill="none" opacity=".7"/>
</g>
<g transform="translate(250.4,115.600) scale(.775,1)" fill="#fff" stroke="#fff" stroke-width=".8" stroke-linejoin="round" font-family="'Liberation Sans',sans-serif" font-weight="700" font-size="28.800" opacity=".13"><text>Appen</text></g>
</svg><div class="badge"><svg width="14" height="12"><use href="#bi"/></svg><span>Image Data</span></div></div>
  <h3 style="letter-spacing:-0.11px">外伤损伤_100</h3>
  <div class="ds" style="top:183.800px">No introduction yet</div>
</div>
</div>
</body>
</html>
